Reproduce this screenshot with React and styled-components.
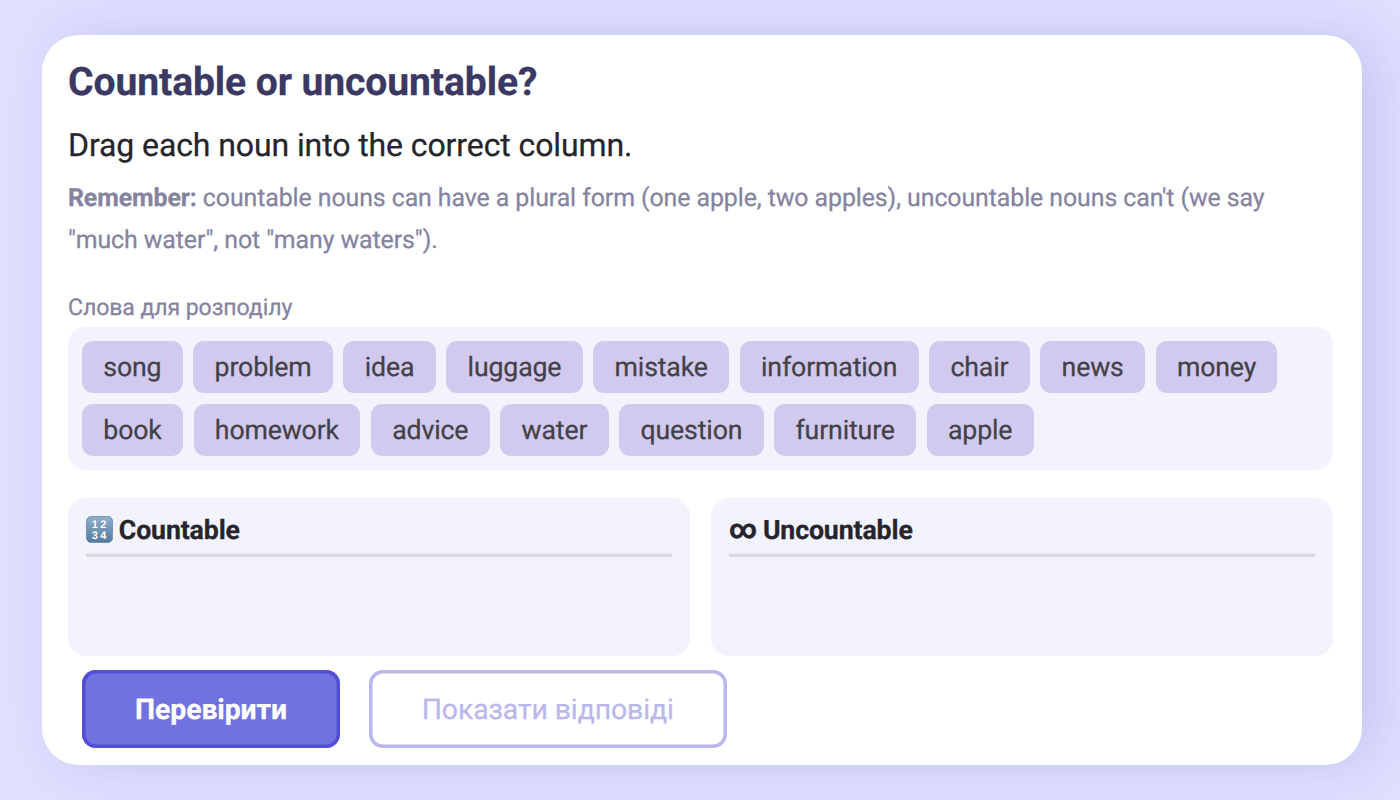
import styled, { createGlobalStyle } from "styled-components"

const GlobalStyle = createGlobalStyle`
* {
    box-sizing: border-box;
}

body {
    margin: 0;
    background: #e0e1ff;
    font-family: Roboto, "Liberation Sans", sans-serif;
    text-rendering: geometricPrecision;
    letter-spacing: -.1px;
    -webkit-text-stroke: .25px;
    color: #25252b;
}
`

const Page = styled.main`
height: 800px;
padding: 34.5px 38.5px 35.5px 41.5px;
overflow: hidden;
`

const Card = styled.section`
height: 730px;
padding: 25px 28.5px 0 26.5px;
background: #fff;
border-radius: 37px;
box-shadow: 17px 0 58px rgba(86, 78, 190, .2);
`

const Title = styled.h1`
margin: 0;
font-size: 39.1px;
line-height: 44px;
font-weight: 700;
color: #3b3963;
`

const Task = styled.p`
margin: 16px 0 0;
font-size: 32px;
line-height: 50px;
`

const Hint = styled.p`
margin: 8px 0 0;
font-size: 24.9px;
line-height: 42.3px;
letter-spacing: -.085px;
color: #85839f;
`

const Label = styled.div`
margin-top: 31px;
font-size: 23.1px;
line-height: 30px;
color: #85839f;
`

const WordBank = styled.div`
display: flex;
flex-wrap: wrap;
align-content: flex-start;
gap: 10.7px 10.6px;
height: 142.5px;
margin-top: 4px;
padding: 14px;
background: #f3f3fe;
border-radius: 18px;
`

const Word = styled.span`
height: 52px;
padding: 0 21.3px;
background: #d2caee;
border-radius: 11px;
font-size: 26.7px;
line-height: 52px;
letter-spacing: -.15px;
color: #434148;
`

const Columns = styled.div`
display: grid;
grid-template-columns: 1fr 1fr;
gap: 21.4px;
margin-top: 28.5px;
`

const Column = styled.div`
height: 157.5px;
padding: 14px 17.8px;
background: #f3f3fe;
border-radius: 18px;
`

const ColumnTitle = styled.div`
display: flex;
align-items: center;
gap: 6px;
height: 44.5px;
padding-bottom: 9.5px;
box-shadow: inset 0 -3.5px #dadadf;
font-size: 26.7px;
font-weight: 700;
letter-spacing: -.13px;
`

const Infinity = styled.span`
padding-bottom: 2px;
-webkit-text-stroke: .5px;
`

const Buttons = styled.div`
display: flex;
gap: 28.5px;
margin-top: 14px;
padding-left: 14px;
`

const Button = styled.button`
height: 78px;
padding: 1px 53.1px 0;
background: ${(props) => (props.$primary ? "#7171df" : "#fff")};
border: 0;
box-shadow: inset 0 0 0 3.5px ${(props) => (props.$primary ? "#524ed6" : "#bab7ed")};
border-radius: 14px;
font-family: inherit;
font-size: 28.4px;
font-weight: ${(props) => (props.$primary ? 700 : 400)};
letter-spacing: -.1px;
text-rendering: inherit;
color: ${(props) => (props.$primary ? "#fff" : "#bab7ed")};
`

const words = [
  "song", "problem", "idea", "luggage", "mistake", "information", "chair", "news",
  "money", "book", "homework", "advice", "water", "question", "furniture", "apple",
]

function NumbersIcon() {
  return (
    <svg width="27" height="27" viewBox="0 0 27 27">
      <defs>
        <linearGradient id="numbers" x1="0" y1="0" x2="0" y2="1">
          <stop offset="0" stopColor="#8db2ce" />
          <stop offset="1" stopColor="#54799c" />
        </linearGradient>
      </defs>
      <rect x=".4" y=".4" width="26.2" height="26.2" rx="5" fill="url(#numbers)" stroke="#5f86a5" strokeWidth=".8" />
      <g fill="#fff" fontSize="11" fontWeight="700" textAnchor="middle" fontFamily="Liberation Sans, sans-serif">
        <text x="8.7" y="12">1</text>
        <text x="17.3" y="12">2</text>
        <text x="8.7" y="22.5">3</text>
        <text x="17.3" y="22.5">4</text>
      </g>
    </svg>
  )
}

export default function App() {
  return (
    <Page>
      <GlobalStyle />
      <Card>
        <Title>Countable or uncountable?</Title>
        <Task>Drag each noun into the correct column.</Task>
        <Hint>
          <b>Remember:</b> countable nouns can have a plural form (one apple, two apples), uncountable
          nouns can't (we say "much water", not "many waters").
        </Hint>
        <Label>Слова для розподілу</Label>
        <WordBank>
          {words.map((word) => (
            <Word key={word}>{word}</Word>
          ))}
        </WordBank>
        <Columns>
          <Column>
            <ColumnTitle><NumbersIcon /> Countable</ColumnTitle>
          </Column>
          <Column>
            <ColumnTitle><Infinity>∞</Infinity> Uncountable</ColumnTitle>
          </Column>
        </Columns>
        <Buttons>
          <Button $primary>Перевірити</Button>
          <Button>Показати відповіді</Button>
        </Buttons>
      </Card>
    </Page>
  )
}
